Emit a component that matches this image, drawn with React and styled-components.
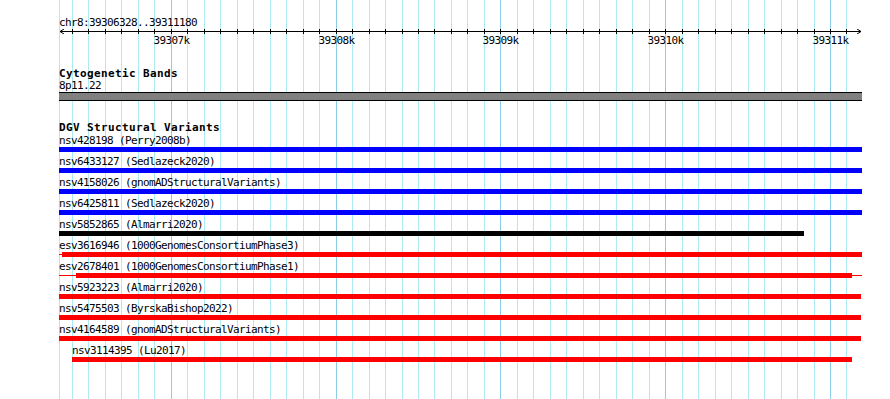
import React from 'react';
import styled, { createGlobalStyle } from 'styled-components';

const ORIGIN = 59
const PANEL_W = 803

// bp -> px inside the panel (panel starts at x=59)
const bpToX = (bp) => 171.3 + (bp - 39307000) * 0.1648 - ORIGIN

const GlobalStyle = createGlobalStyle`
  html, body {
    margin: 0;
    padding: 0;
    background: #fff;
  }
`

const Page = styled.div`
  position: relative;
  width: 890px;
  height: 399px;
  overflow: hidden;
  background: #fff;
  font-family: "DejaVu Sans Mono", "Liberation Mono", monospace;
  color: #000;
`

const GridLayer = styled.div`
  position: absolute;
  top: 0;
  bottom: 0;
  left: ${ORIGIN}px;
  width: ${PANEL_W}px;
  z-index: 0;
`

const GridLine = styled.div`
  position: absolute;
  top: 0;
  bottom: 0;
  width: 1px;
  background: ${(p) => (p.$major ? '#8ccde9' : '#aeeaf1')};
`

const Content = styled.div`
  position: relative;
  z-index: 1;
  padding-left: ${ORIGIN}px;
  width: ${PANEL_W}px;
`

const Ruler = styled.div`
  padding-top: 16px;
`

const PlainText = styled.div`
  font-size: 11px;
  line-height: 13px;
  height: 13px;
  letter-spacing: -0.62px;
  white-space: pre;
`

const Axis = styled.svg`
  display: block;
  width: ${PANEL_W}px;
  height: 5px;
`

const TickLabels = styled.div`
  position: relative;
  height: 13px;
`

const TickLabel = styled(PlainText)`
  position: absolute;
  top: 0;
  transform: translateX(-50%);
`

const Track = styled.section`
  margin-top: 21px;
`

const TrackTitle = styled.div`
  font-size: 11px;
  font-weight: bold;
  letter-spacing: 0.38px;
  line-height: ${(p) => p.$lh || 11}px;
  height: ${(p) => p.$lh || 11}px;
  white-space: pre;
`

const Band = styled.div`
  height: 7px;
  width: ${PANEL_W}px;
  background: #808080;
  border-top: 1px solid #000;
  border-bottom: 1px solid #000;
`

const Feature = styled.div`
  margin-bottom: 3px;
`

const FeatureLabel = styled(PlainText)`
  padding-left: ${(p) => p.$offset || 0}px;
`

const Glyph = styled.div`
  display: flex;
  align-items: center;
  height: 5px;
  padding-left: ${(p) => p.$offset || 0}px;
`

const Thick = styled.div`
  height: 5px;
  flex: none;
  background: ${(p) => p.$color};
`

const Thin = styled.div`
  height: 1px;
  flex: none;
  background: ${(p) => p.$color};
`

const BLUE = '#0000ff'
const RED = '#ff0000'
const BLACK = '#000000'

// segments in panel px: [kind, width]
const variants = [
  { id: 'nsv428198', src: 'Perry2008b', color: BLUE, offset: 0, segs: [['thick', 803]] },
  { id: 'nsv6433127', src: 'Sedlazeck2020', color: BLUE, offset: 0, segs: [['thick', 803]] },
  { id: 'nsv4158026', src: 'gnomADStructuralVariants', color: BLUE, offset: 0, segs: [['thick', 803]] },
  { id: 'nsv6425811', src: 'Sedlazeck2020', color: BLUE, offset: 0, segs: [['thick', 803]] },
  { id: 'nsv5852865', src: 'Almarri2020', color: BLACK, offset: 0, segs: [['thick', 745]] },
  { id: 'esv3616946', src: '1000GenomesConsortiumPhase3', color: RED, offset: 0, segs: [['thin', 3], ['thick', 800]] },
  { id: 'esv2678401', src: '1000GenomesConsortiumPhase1', color: RED, offset: 0, segs: [['thin', 17], ['thick', 776], ['thin', 10]] },
  { id: 'nsv5923223', src: 'Almarri2020', color: RED, offset: 0, segs: [['thick', 802]] },
  { id: 'nsv5475503', src: 'ByrskaBishop2022', color: RED, offset: 0, segs: [['thick', 802]] },
  { id: 'nsv4164589', src: 'gnomADStructuralVariants', color: RED, offset: 0, segs: [['thick', 802]] },
  { id: 'nsv3114395', src: 'Lu2017', color: RED, offset: 13, segs: [['thick', 780]] },
]

const gridStops = []
for (let bp = 39306400; bp <= 39311100; bp += 100) {
  gridStops.push({ bp, x: Math.floor(bpToX(bp)), major: bp % 1000 === 0 })
}

const RulerAxis = () =>
  <Axis viewBox={`0 0 ${PANEL_W} 5`} shapeRendering="crispEdges">
    <rect x="1" y="2" width={PANEL_W - 2} height="1" fill="#000" />
    {gridStops.map((g) =>
      <rect key={g.bp} x={g.x} y="0" width="1" height="5" fill="#000" />
    )}
    <polyline points="5,0 1,2.5 5,5" fill="none" stroke="#000" strokeWidth="1" shapeRendering="auto" />
    <polyline points={`${PANEL_W - 5},0 ${PANEL_W - 1},2.5 ${PANEL_W - 5},5`} fill="none" stroke="#000" strokeWidth="1" shapeRendering="auto" />
  </Axis>

const App = () =>
  <Page>
    <GlobalStyle />
    <GridLayer>
      <GridLine style={{ left: 0 }} />
      {gridStops.map((g) =>
        <GridLine key={g.bp} $major={g.major} style={{ left: g.x }} />
      )}
    </GridLayer>
    <Content>
      <Ruler>
        <PlainText>chr8:39306328..39311180</PlainText>
        <RulerAxis />
        <TickLabels>
          {gridStops.filter((g) => g.major).map((g) =>
            <TickLabel key={g.bp} style={{ left: g.x + 0.5 }}>{g.bp / 1000}k</TickLabel>
          )}
        </TickLabels>
      </Ruler>
      <Track>
        <TrackTitle>Cytogenetic Bands</TrackTitle>
        <PlainText>8p11.22</PlainText>
        <Band />
      </Track>
      <Track>
        <TrackTitle $lh={12}>DGV Structural Variants</TrackTitle>
        {variants.map((v) =>
          <Feature key={v.id}>
            <FeatureLabel $offset={v.offset}>{`${v.id} (${v.src})`}</FeatureLabel>
            <Glyph $offset={v.offset}>
              {v.segs.map(([kind, w], i) =>
                kind === 'thick'
                  ? <Thick key={i} $color={v.color} style={{ width: w }} />
                  : <Thin key={i} $color={v.color} style={{ width: w }} />
              )}
            </Glyph>
          </Feature>
        )}
      </Track>
    </Content>
  </Page>

export default App
